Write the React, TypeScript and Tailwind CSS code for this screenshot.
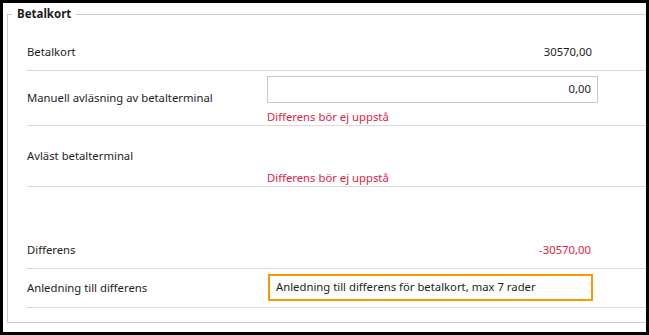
const Row = ({
  label,
  children,
  className,
}: {
  label: string;
  children?: React.ReactNode;
  className: string;
}) => {
  return (
    <div className={`flex border-b border-[#dadada] ${className}`}>
      <div className="w-[240px] flex items-center shrink-0">{label}</div>
      <div className="w-[331px] shrink-0 flex flex-col">{children}</div>
    </div>
  );
};

const App = () => {
  return (
    <div
      className="w-[649px] h-[335px] bg-black p-[3px] text-[11.3px] text-[#1e1e1e]"
      style={{ fontFamily: '"Noto Sans", "Open Sans", sans-serif' }}
    >
      <div className="w-full h-full bg-white overflow-hidden">
        <fieldset className="ml-[4px] mt-[3px] w-[700px] border border-[#cfcfcf] pl-[19px] pb-[14px]">
          <legend className="-ml-[15px] px-[5px] font-bold leading-[16px] text-[11.5px]">
            Betalkort
          </legend>

          <div className="pt-[12px]">
            <Row label="Betalkort" className="h-[37px]">
              <div className="h-full flex items-center justify-end pr-[6px]">
                30570,00
              </div>
            </Row>

            <Row label="Manuell avläsning av betalterminal" className="h-[55px]">
              <div className="mt-[5px] h-[27px] border border-[#c8c8c8] flex items-center justify-end pr-[6px]">
                0,00
              </div>
              <div className="mt-[6px] leading-[16px] text-[#e41d44]">
                Differens bör ej uppstå
              </div>
            </Row>

            <Row label="Avläst betalterminal" className="h-[61px]">
              <div className="mt-[44px] leading-[16px] text-[#e41d44]">
                Differens bör ej uppstå
              </div>
            </Row>

            <div className="h-[45px]" />

            <Row label="Differens" className="h-[37px]">
              <div className="h-full flex items-center justify-end pr-[7px] text-[#e41d44]">
                -30570,00
              </div>
            </Row>

            <Row label="Anledning till differens" className="h-[39px]">
              <div className="mt-[5px] ml-[1px] w-[325px] h-[27px] border-2 border-[#f59c00] flex items-center px-[6px]">
                Anledning till differens för betalkort, max 7 rader
              </div>
            </Row>
          </div>
        </fieldset>
      </div>
    </div>
  );
};

export default App;
